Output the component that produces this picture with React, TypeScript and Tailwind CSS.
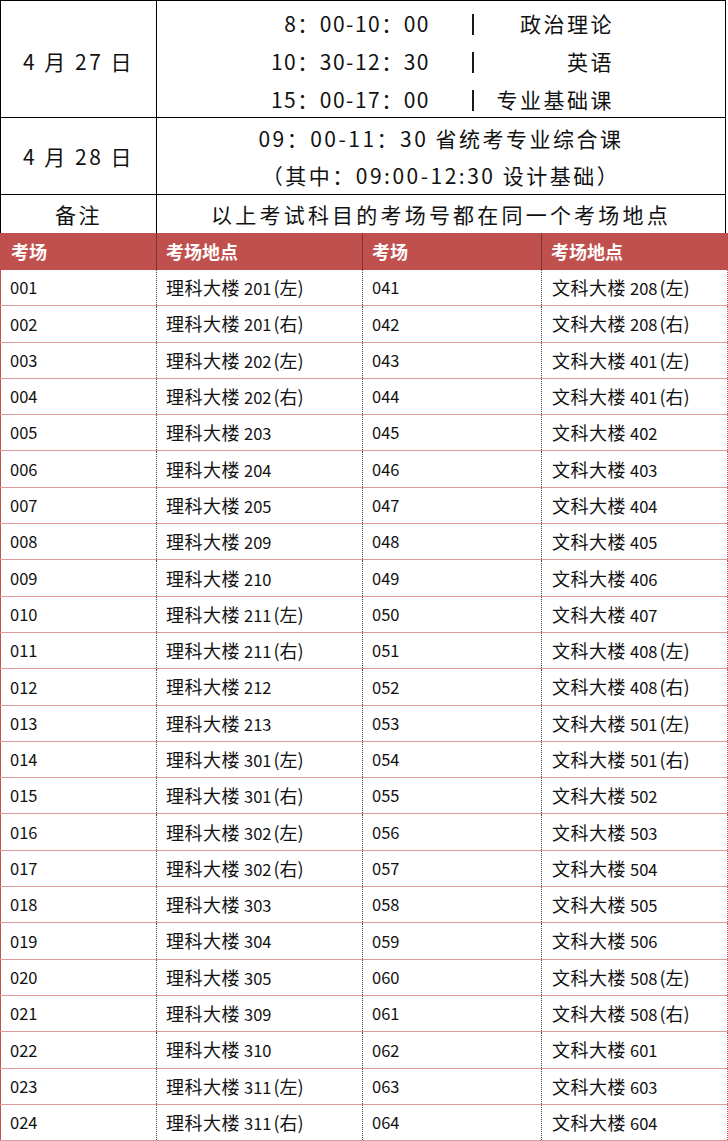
import React from "react";

const left: [string, string, string][] = [
  ["001", "201", "(左)"],
  ["002", "201", "(右)"],
  ["003", "202", "(左)"],
  ["004", "202", "(右)"],
  ["005", "203", ""],
  ["006", "204", ""],
  ["007", "205", ""],
  ["008", "209", ""],
  ["009", "210", ""],
  ["010", "211", "(左)"],
  ["011", "211", "(右)"],
  ["012", "212", ""],
  ["013", "213", ""],
  ["014", "301", "(左)"],
  ["015", "301", "(右)"],
  ["016", "302", "(左)"],
  ["017", "302", "(右)"],
  ["018", "303", ""],
  ["019", "304", ""],
  ["020", "305", ""],
  ["021", "309", ""],
  ["022", "310", ""],
  ["023", "311", "(左)"],
  ["024", "311", "(右)"],
];

const right: [string, string, string][] = [
  ["041", "208", "(左)"],
  ["042", "208", "(右)"],
  ["043", "401", "(左)"],
  ["044", "401", "(右)"],
  ["045", "402", ""],
  ["046", "403", ""],
  ["047", "404", ""],
  ["048", "405", ""],
  ["049", "406", ""],
  ["050", "407", ""],
  ["051", "408", "(左)"],
  ["052", "408", "(右)"],
  ["053", "501", "(左)"],
  ["054", "501", "(右)"],
  ["055", "502", ""],
  ["056", "503", ""],
  ["057", "504", ""],
  ["058", "505", ""],
  ["059", "506", ""],
  ["060", "508", "(左)"],
  ["061", "508", "(右)"],
  ["062", "601", ""],
  ["063", "603", ""],
  ["064", "604", ""],
];

const font = { fontFamily: '"Noto Sans CJK SC", "Noto Sans", sans-serif' };

function TimeLine({ time, subject }: { time: string; subject: string }) {
  return (
    <div className="flex h-[38px] shrink-0 items-center">
      <span className="w-[273px] text-right tracking-[1.5px]">{time}</span>
      <span className="ml-[32px] flex w-[21px] justify-center">
        <span className="inline-block h-[21px] w-[2px] bg-[#1a1a1a]" />
      </span>
      <span className="w-[131px] text-right">{subject}</span>
    </div>
  );
}

function Place({ name, num, side }: { name: string; num: string; side: string }) {
  return (
    <span className="whitespace-nowrap">
      <span className="tracking-[0.5px]">{name}</span>
      <span className="ml-[4px] text-[16.5px]">{num}</span>
      {side ? <span className="ml-[2px]">{side}</span> : null}
    </span>
  );
}

export default function App() {
  return (
    <div className="w-[728px] bg-white text-[#111]" style={font}>
      {/* top schedule table */}
      <div className="w-[726px] border-l border-r border-t border-black text-[21px] tracking-[2.5px]">
        <div className="flex h-[117px] border-b border-black">
          <div className="flex w-[156px] items-center justify-center border-r border-black pt-[6px]">
            4 月 27 日
          </div>
          <div className="flex flex-1 flex-col justify-start pt-[4px]">
            <TimeLine time="8：00-10：00" subject="政治理论" />
            <TimeLine time="10：30-12：30" subject="英语" />
            <TimeLine time="15：00-17：00" subject="专业基础课" />
          </div>
        </div>
        <div className="flex h-[77px] border-b border-black">
          <div className="flex w-[156px] items-center justify-center border-r border-black pt-[1px]">
            4 月 28 日
          </div>
          <div className="flex flex-1 flex-col items-center justify-center pt-[2px]">
            <div className="flex h-[38px] items-center">09：00-11：30 省统考专业综合课</div>
            <div className="flex h-[38px] items-center">（其中：09:00-12:30 设计基础）</div>
          </div>
        </div>
        <div className="flex h-[38px]">
          <div className="flex w-[156px] items-center justify-center border-r border-black pt-[1px]">
            备注
          </div>
          <div className="flex flex-1 items-center justify-center pt-[1px] tracking-[3.2px]">
            以上考试科目的考场号都在同一个考场地点
          </div>
        </div>
      </div>

      {/* header */}
      <div className="grid h-[37px] grid-cols-[156px_206px_179px_187px] bg-[#c0504d] text-[18px] font-bold text-white">
        <div className="flex items-center pl-[11px]">考场</div>
        <div className="flex items-center border-l border-[#7a3433] pl-[9px]">考场地点</div>
        <div className="flex items-center border-l border-[#7a3433] pl-[9px]">考场</div>
        <div className="flex items-center border-l border-[#7a3433] pl-[9px]">考场地点</div>
      </div>

      {/* data rows */}
      <div className="flex flex-col text-[18px]">
        {left.map((l, i) => {
          const r = right[i];
          return (
            <div
              key={l[0]}
              className="grid h-[36.3px] grid-cols-[156px_206px_179px_187px] border-b border-[#dc9a98]"
            >
              <div className="flex items-center border-l border-[#c0504d] pl-[9px] text-[16.5px]">{l[0]}</div>
              <div className="flex items-center border-l border-dotted border-[#444] pl-[9px]">
                <Place name="理科大楼" num={l[1]} side={l[2]} />
              </div>
              <div className="flex items-center border-l border-dotted border-[#444] pl-[9px] text-[16.5px]">{r[0]}</div>
              <div className="flex items-center border-l border-r border-dotted border-l-[#444] border-r-[#c0504d] pl-[10px]">
                <Place name="文科大楼" num={r[1]} side={r[2]} />
              </div>
            </div>
          );
        })}
      </div>
    </div>
  );
}
